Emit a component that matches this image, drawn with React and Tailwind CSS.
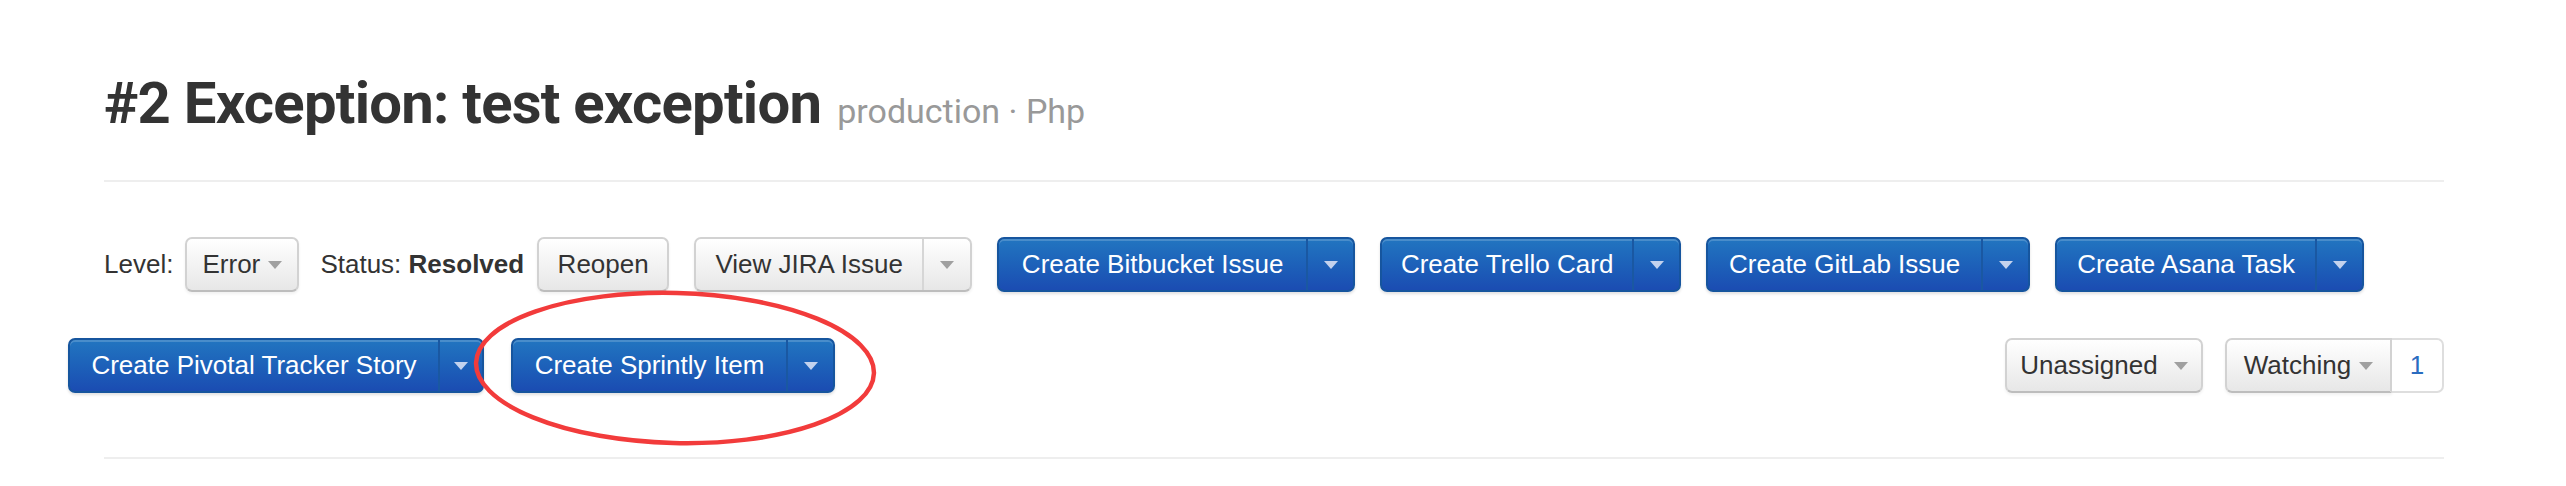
import React from 'react'

const Caret = ({ light }) => (
  <span
    className={`inline-block w-0 h-0 border-t-[8px] border-x-[7px] border-x-transparent ${light ? 'border-t-[#c3d2ee]' : 'border-t-[#a0a0a0]'}`}
  />
)

function WhiteBtn({ w, children, caret }) {
  return (
    <button
      className={`h-[55px] ${w} flex items-center justify-center gap-[8px] rounded-[7px] border-2 border-[#d2d2d2] border-b-[#bdbdbd] bg-linear-to-b from-white to-[#e7e7e7] text-[#333] shadow-[0_2px_3px_rgba(0,0,0,0.06)]`}
    >
      <span>{children}</span>
      {caret && <Caret />}
    </button>
  )
}

function WhiteSplit({ w, label }) {
  return (
    <div className="h-[55px] flex rounded-[7px] border-2 border-[#d2d2d2] border-b-[#bdbdbd] bg-linear-to-b from-white to-[#e7e7e7] text-[#333] shadow-[0_2px_3px_rgba(0,0,0,0.06)]">
      <button className={`${w} flex items-center justify-center`}>{label}</button>
      <button className="w-[48px] flex items-center justify-center border-l-2 border-[#d6d6d6]">
        <Caret />
      </button>
    </div>
  )
}

function BlueSplit({ w, label, cw = 'w-[47px]' }) {
  return (
    <div className="h-[55px] flex rounded-[7px] border-2 border-[#16559e] bg-linear-to-b from-[#2275c0] to-[#1b4cb2] text-white shadow-[inset_0_2px_0_rgba(255,255,255,0.18),0_2px_3px_rgba(0,0,0,0.12)] [text-shadow:0_-2px_0_rgba(0,0,0,0.22)]">
      <button className={`${w} flex items-center justify-center`}>{label}</button>
      <button className={`${cw} flex items-center justify-center border-l-2 border-[#1a58a2]`}>
        <Caret light />
      </button>
    </div>
  )
}

export default function App() {
  return (
    <div className="relative w-[2566px] h-[486px] bg-white overflow-hidden font-['Liberation_Sans',Arial,sans-serif] text-[26px] text-[#333]">
      <div className="ml-[104px] w-[2340px] pt-[74px]">
        {/* title */}
        <div className="flex items-baseline gap-[16px]">
          <h1 className="font-['Roboto',sans-serif] font-bold text-[58px] leading-none tracking-[-0.75px] text-[#333]">
            #2 Exception: test exception
          </h1>
          <span className="font-['Roboto',sans-serif] text-[34px] leading-none text-[#999]">production · Php</span>
        </div>
        <div className="mt-[48px] h-[2px] bg-[#eeeeee]" />

        {/* actions row */}
        <div className="mt-[55px] flex items-center">
          <span>Level:</span>
          <div className="ml-[12px]">
            <WhiteBtn w="w-[114px]" caret>Error</WhiteBtn>
          </div>
          <span className="ml-[21px]">Status: <b>Resolved</b></span>
          <div className="ml-[13px] flex items-center gap-[25px]">
            <WhiteBtn w="w-[132px]">Reopen</WhiteBtn>
            <WhiteSplit w="w-[226px]" label="View JIRA Issue" />
            <BlueSplit w="w-[307px]" label="Create Bitbucket Issue" />
            <BlueSplit w="w-[250px]" label="Create Trello Card" />
            <BlueSplit w="w-[273px]" label="Create GitLab Issue" />
            <BlueSplit w="w-[258px]" label="Create Asana Task" />
          </div>
        </div>

        <div className="mt-[46px] flex items-center justify-between">
          <div className="-ml-[36px] flex items-center gap-[27px]">
            <BlueSplit w="w-[368px]" label="Create Pivotal Tracker Story" cw="w-[44px]" />
            <BlueSplit w="w-[273px]" label="Create Sprintly Item" />
          </div>
          <div className="flex items-center gap-[22px]">
            <WhiteBtn w="w-[198px] !gap-[16px]" caret>Unassigned</WhiteBtn>
            <div className="h-[55px] flex">
              <button className="w-[167px] flex items-center justify-center gap-[8px] rounded-l-[7px] border-2 border-[#d2d2d2] border-b-[#bdbdbd] bg-linear-to-b from-white to-[#e7e7e7] shadow-[0_2px_3px_rgba(0,0,0,0.06)]">
                <span>Watching</span>
                <Caret />
              </button>
              <span className="w-[52px] flex items-center justify-center rounded-r-[7px] border-2 border-l-0 border-[#dedede] bg-white text-[#2a6cbf]">
                1
              </span>
            </div>
          </div>
        </div>

        <div className="mt-[64px] h-[2px] bg-[#eeeeee]" />
      </div>

      {/* red annotation ellipse */}
      <svg className="absolute left-[470px] top-[287px] pointer-events-none" width="410" height="162" viewBox="0 0 410 162">
        <ellipse cx="205" cy="81" rx="199" ry="75" fill="none" stroke="#f23b3b" strokeWidth="4.5" transform="rotate(1.5 205 81)" />
      </svg>
    </div>
  )
}
